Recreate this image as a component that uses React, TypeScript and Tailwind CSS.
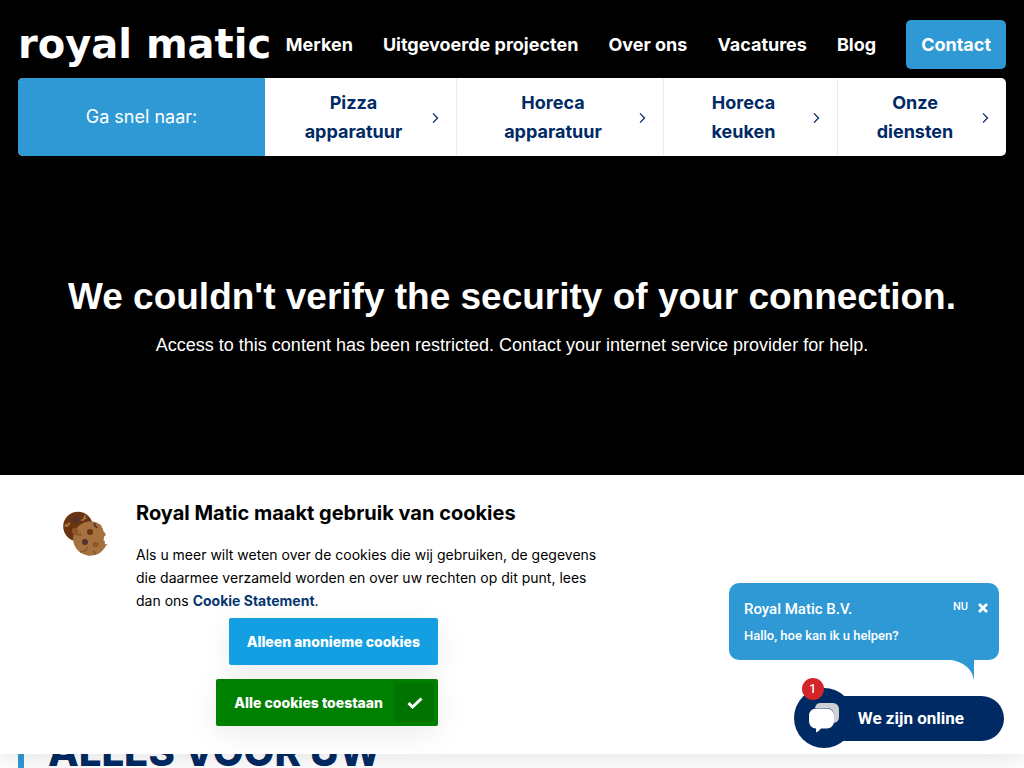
import { useState } from "react";

const NAV_LINKS = ["Merken", "Uitgevoerde projecten", "Over ons", "Vacatures", "Blog"];

const QUICK_LINKS = [
  ["Pizza", "apparatuur"],
  ["Horeca", "apparatuur"],
  ["Horeca", "keuken"],
  ["Onze", "diensten"],
];

function ChevronIcon() {
  return (
    <svg viewBox="0 0 10 12" className="mt-px h-3 w-2.5 shrink-0" fill="none" stroke="#002a64" strokeWidth="1.3" aria-hidden="true">
      <path d="M3 1.4 7.500 6 3 10.6" />
    </svg>
  );
}

function CookieIcon() {
  return (
    <svg viewBox="0 0 45 46" className="h-[46px] w-[45px] shrink-0" aria-hidden="true">
      <circle cx="15" cy="15.5" r="14.8" fill="#6a3312" />
      <circle cx="13" cy="8.5" r="3.2" fill="#533330" />
      <g fill="none" stroke="#a5713e" strokeWidth="1.8">
        <path d="M1.5 14.5Q5.500 16.500 6.500 11.500M3 13l2 2" />
        <path d="M18 9q4 1 4-5M20 6.500l3.500 1" />
      </g>
      <path
        fill="#a5713e"
        d="M38.500 14.500A17.200 17.200 0 1 0 42.500 35.500L44.500 33l-2.500.3q-.500-1.800 0-3-1.800-.800-1.500-2.500 1-.5.500-2 .8-1.300 2-1.300-1.200-1-.5-2.500-1.800-.5-2-2-1-1.500-.500-2.500-1.500-.5-1.500-3z"
      />
      <circle cx="12" cy="20" r="3.200" fill="#8f5527" />
      <path d="M11 22.500q3 2 7 .5M17 22l1 3" fill="none" stroke="#8a5429" strokeWidth="1.400" />
      <path d="M17 41q6 0 8-5M30 39.500l3 4M21 39l2 1" fill="none" stroke="#8a5429" strokeWidth="1.300" />
      <path d="M31.500 12q0 4 3 4.500" fill="none" stroke="#533330" strokeWidth="1.800" />
      <circle cx="27" cy="21" r="3" fill="#6a3312" />
      <circle cx="22" cy="31" r="3" fill="#533330" />
      <circle cx="32.500" cy="33.500" r="2.800" fill="#8f5527" />
    </svg>
  );
}

function Header() {
  return (
    <header className="px-[18px] pt-5">
      <div className="flex items-center justify-between">
        <a href="#" className="font-['DejaVu_Sans'] text-[40px] leading-[49px] font-bold whitespace-nowrap">
          royal matic
        </a>
        <nav className="flex items-center gap-[30px] text-lg font-bold whitespace-nowrap">
          {NAV_LINKS.map((label) => (
            <a key={label} href="#">
              {label}
            </a>
          ))}
          <a href="#" className="rounded-[5px] bg-[#2f99d5] px-[15px] leading-[49px]">
            Contact
          </a>
        </nav>
      </div>
      <div className="mt-[9px] grid grid-cols-[247fr_191fr_207fr_174fr_169fr] overflow-hidden rounded-[5px] bg-white">
        <div className="flex items-center justify-center bg-[#2f99d5] text-lg">Ga snel naar:</div>
        {QUICK_LINKS.map(([first, second], i) => (
          <a
            key={i}
            href="#"
            className="flex items-center gap-1 border-l border-[#e8ecf6] px-4 py-[10px] text-center text-lg leading-[29px] font-bold text-[#002a64] first-of-type:border-l-0"
          >
            <span className="flex-1">
              {first}
              <br />
              {second}
            </span>
            <ChevronIcon />
          </a>
        ))}
      </div>
    </header>
  );
}

function CookieBanner() {
  return (
    <section className="relative z-10 flex items-start gap-7 overflow-hidden bg-white px-[63px] pt-6 pb-7 text-black shadow-[0_0_30px_rgba(0,0,0,0.14)]">
      <div className="pt-3">
        <CookieIcon />
      </div>
      <div className="max-w-[490px]">
        <h2 className="text-xl leading-7 font-bold">Royal Matic maakt gebruik van cookies</h2>
        <p className="mt-4 text-sm leading-[23px]">
          Als u meer wilt weten over de cookies die wij gebruiken, de gegevens
          <br />
          die daarmee verzameld worden en over uw rechten op dit punt, lees
          <br />
          dan ons{" "}
          <a href="#" className="font-bold text-[#06366f]">
            Cookie Statement
          </a>
          .
        </p>
        <div className="mt-[6px] flex w-[302px] flex-col items-end gap-[14px] text-sm font-extrabold text-white">
          <button type="button" className="h-[47px] rounded-xs bg-[#139fe2] px-[18px] shadow-[0_8px_30px_rgba(0,0,0,0.08)]">
            Alleen anonieme cookies
          </button>
          <button
            type="button"
            className="flex h-[47px] items-center gap-3 rounded-xs bg-[#008000] pr-1 pl-[18px] shadow-[0_8px_30px_rgba(0,0,0,0.08)]"
          >
            Alle cookies toestaan
            <span className="flex h-[39px] w-[39px] items-center justify-center rounded-xs bg-[#007300]">
              <svg viewBox="0 0 16 12" className="h-3 w-4" fill="none" stroke="#fff" strokeWidth="3" aria-hidden="true">
                <path d="m1.500 6 4 4L14.500 1.500" />
              </svg>
            </span>
          </button>
        </div>
      </div>
    </section>
  );
}

function ChatWidget() {
  const [open, setOpen] = useState(true);

  return (
    <aside className="fixed right-5 bottom-5 z-20 font-[Roboto] text-white">
      {open && (
        <div className="absolute -right-[-5px] bottom-[88px] w-[270px] rounded-[10px] bg-[#2f99d5] px-[15px] pt-[14px] pb-[13px]">
          <div className="flex items-start gap-[10px]">
            <p className="flex-1 text-[15px] leading-6 font-medium">Royal Matic B.V.</p>
            <span className="text-[11px] leading-5 font-medium">NU</span>
            <button type="button" aria-label="Sluiten" onClick={() => setOpen(false)} className="mt-[6px] -mr-1">
              <svg viewBox="0 0 10 10" className="h-[10px] w-[10px]" stroke="#fff" strokeWidth="2.8" aria-hidden="true">
                <path d="m1 1 8 8M9 1 1 9" />
              </svg>
            </button>
          </div>
          <p className="mt-[3px] text-[13px] leading-[23px] font-medium">Hallo, hoe kan ik u helpen?</p>
          <svg viewBox="0 0 22 20" className="absolute top-full right-[25px] h-5 w-[22px]" fill="#2f99d5" aria-hidden="true">
            <path d="M0 0h22v20Q19 4 0 0Z" />
          </svg>
        </div>
      )}
      <button type="button" className="relative flex items-center">
        <span className="relative z-10 flex h-[60px] w-[60px] items-center justify-center rounded-full bg-[#002a64]">
          <svg viewBox="0 0 30 30" className="h-[30px] w-[30px]" aria-hidden="true">
            <path fill="#d0d0d2" d="M12 0h12a6 6 0 0 1 6 6v8a6 6 0 0 1-5 6V12a7 7 0 0 0-7-7H6a6 6 0 0 1 6-5Z" />
            <path fill="#fff" d="M7 5.500h11a7 7 0 0 1 7 7v6a7 7 0 0 1-7 7h-6q-2 3-5 4v-4a7 7 0 0 1-7-7v-6a7 7 0 0 1 7-7Z" />
          </svg>
        </span>
        <span className="-ml-7 rounded-r-full bg-[#002a64] pr-10 pl-8 text-[17px] leading-[45px] font-bold">We zijn online</span>
        <span className="absolute -top-[10px] left-2 z-10 h-[22px] w-[22px] rounded-full bg-[#d4252a] text-[13px] leading-[22px] font-medium">
          1
        </span>
      </button>
    </aside>
  );
}

export default function App() {
  return (
    <div className="h-screen overflow-hidden bg-white font-[Inter,sans-serif]">
      <div className="bg-black text-white">
        <Header />
        <main className="px-6 pt-[116px] pb-[117px] text-center font-['Liberation_Sans']">
          <h1 className="text-[37px] leading-[50px] font-bold">We couldn&apos;t verify the security of your connection.</h1>
          <p className="mt-[10px] text-lg leading-[26px]">
            Access to this content has been restricted. Contact your internet service provider for help.
          </p>
        </main>
      </div>
      <CookieBanner />
      <section className="-mt-8 px-[18px]">
        <h2 className="border-l-[6px] border-[#2f99d5] pl-6 text-[40px] leading-[60px] font-extrabold text-[#002a64]">ALLES VOOR UW</h2>
      </section>
      <ChatWidget />
    </div>
  );
}
